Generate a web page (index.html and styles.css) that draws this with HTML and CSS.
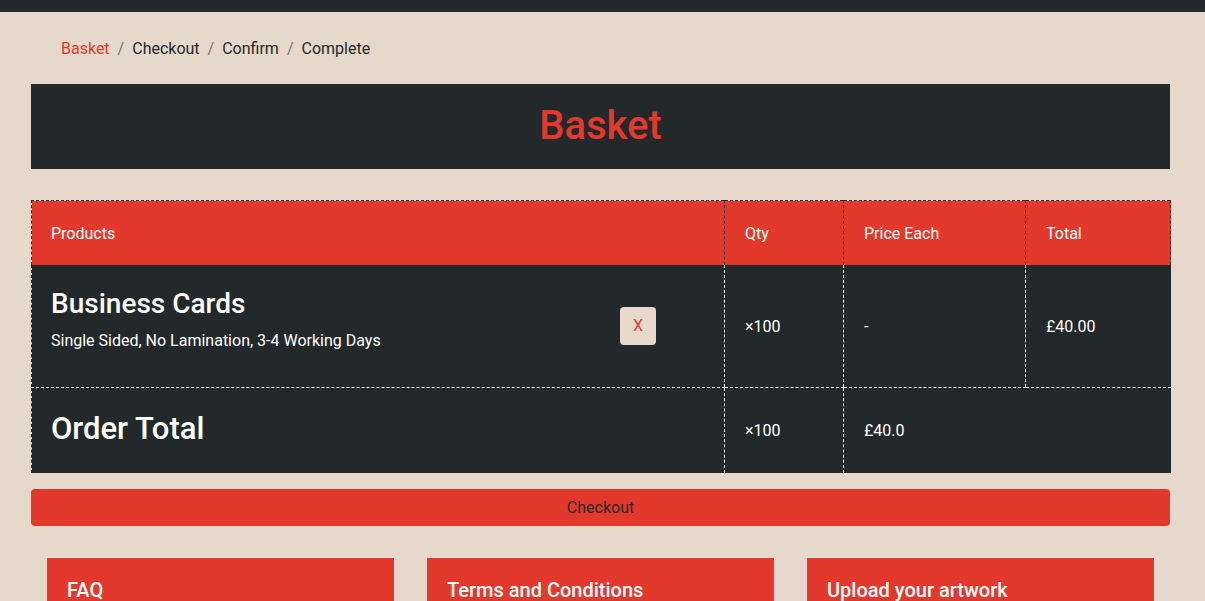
FILE: index.html
```html
<!DOCTYPE html>
<html lang="en">
<head>
<meta charset="utf-8">
<title>Basket</title>
<link rel="stylesheet" href="styles.css">
</head>
<body>
<div class="topbar"></div>
<main class="page">
  <nav class="crumbs">
    <a class="crumb active" href="#">Basket</a>
    <span class="sep">/</span>
    <span class="crumb">Checkout</span>
    <span class="sep">/</span>
    <span class="crumb">Confirm</span>
    <span class="sep">/</span>
    <span class="crumb">Complete</span>
  </nav>

  <header class="banner"><h1>Basket</h1></header>

  <table class="basket">
    <colgroup>
      <col class="c-prod"><col class="c-qty"><col class="c-price"><col class="c-total">
    </colgroup>
    <thead>
      <tr>
        <th>Products</th>
        <th>Qty</th>
        <th>Price Each</th>
        <th class="last">Total</th>
      </tr>
    </thead>
    <tbody>
      <tr class="item">
        <td>
          <div class="product">
            <div class="info">
              <h3>Business Cards</h3>
              <p>Single Sided, No Lamination, 3-4 Working Days</p>
            </div>
            <button class="remove" type="button">X</button>
          </div>
        </td>
        <td class="v">×100</td>
        <td class="v">-</td>
        <td class="v">£40.00</td>
      </tr>
      <tr class="sum">
        <td><h2>Order Total</h2></td>
        <td class="v">×100</td>
        <td class="v">£40.0</td>
        <td class="empty"></td>
      </tr>
    </tbody>
  </table>

  <button class="checkout" type="button">Checkout</button>

  <section class="cards">
    <div class="card"><h5>FAQ</h5></div>
    <div class="card"><h5>Terms and Conditions</h5></div>
    <div class="card"><h5>Upload your artwork</h5></div>
  </section>
</main>
</body>
</html>
```

FILE: styles.css
```css
* { box-sizing: border-box; }

html, body {
  margin: 0;
  height: 100%;
  overflow: hidden;
}

body {
  background: #e6d9cc;
  color: #23292b;
  font-family: Roboto, "Liberation Sans", sans-serif;
  font-size: 16px;
  line-height: 1.5;
}

.topbar {
  height: 12px;
  background: #23292b;
}

.page {
  width: 1139px;
  margin-left: 31px;
}

/* breadcrumb */
.crumbs {
  display: flex;
  align-items: center;
  padding: 25px 30px 0;
  height: 48px;
  line-height: 24px;
}
.crumb { color: #23292b; text-decoration: none; }
.crumb.active { color: #e2392c; }
.sep { color: #6c757d; padding: 0 8px; }

/* banner */
.banner {
  margin-top: 24px;
  background: #23292b;
  height: 85px;
  padding-top: 18px;
  text-align: center;
}
.banner h1 {
  margin: 0;
  color: #e2392c;
  font-size: 40px;
  font-weight: 500;
  line-height: 48px;
}

/* table */
.basket {
  margin-top: 31px;
  width: 1139px;
  border-collapse: collapse;
  border-top: 1px dashed #23292b;
  border-left: 1px dashed #23292b;
  table-layout: fixed;
}
.c-prod { width: 693px; }
.c-qty { width: 119px; }
.c-price { width: 182px; }
.c-total { width: 145px; }

.basket th {
  background: #e2392c;
  color: #fff;
  font-weight: 400;
  text-align: left;
  height: 64px;
  padding: 2px 20px 0;
  border-left: 1px dashed #23292b;
  vertical-align: middle;
}
.basket th:first-child { border-left: none; padding-left: 19px; }
.basket th.last { border-right: 1px dashed #23292b; }

.basket td {
  background: #23292b;
  color: #fff;
  padding: 0 20px;
  vertical-align: middle;
  border-left: 1px dashed #fff;
}
.basket td:first-child { border-left: none; padding-left: 19px; }
.basket td.empty { border-left: none; }
.basket td.v { padding-top: 2px; }

.item td {
  height: 123px;
  border-bottom: 1px dashed #fff;
}

.sum td { height: 85px; }

.product {
  display: flex;
  align-items: center;
  justify-content: space-between;
  padding-right: 48px;
}
.product h3 {
  margin: 0 0 8px;
  font-size: 28px;
  font-weight: 500;
  line-height: 1.2;
}
.product p {
  margin: 0 0 12px;
  line-height: 24px;
}
.remove {
  width: 36px;
  height: 38px;
  border: none;
  border-radius: 4px;
  background: #e6d9cc;
  color: #e2392c;
  font-family: Roboto, "Liberation Sans", sans-serif;
  font-size: 16px;
  padding: 0;
}

.sum h2 {
  margin: 0 0 4px;
  font-size: 31px;
  font-weight: 500;
  line-height: 1.2;
}

/* checkout */
.checkout {
  display: block;
  width: 100%;
  margin-top: 16px;
  height: 37px;
  border: none;
  border-radius: 4px;
  background: #e2392c;
  color: #23292b;
  font-family: Roboto, "Liberation Sans", sans-serif;
  font-size: 16px;
}

/* cards */
.cards {
  margin-top: 32px;
  padding: 0 16px;
  display: grid;
  grid-template-columns: repeat(3, 347px);
  column-gap: 33px;
}
.card {
  background: #e2392c;
  height: 200px;
  padding: 20px 20px;
}
.card h5 {
  margin: 0;
  color: #fff;
  font-size: 20px;
  font-weight: 500;
  line-height: 24px;
}
```
